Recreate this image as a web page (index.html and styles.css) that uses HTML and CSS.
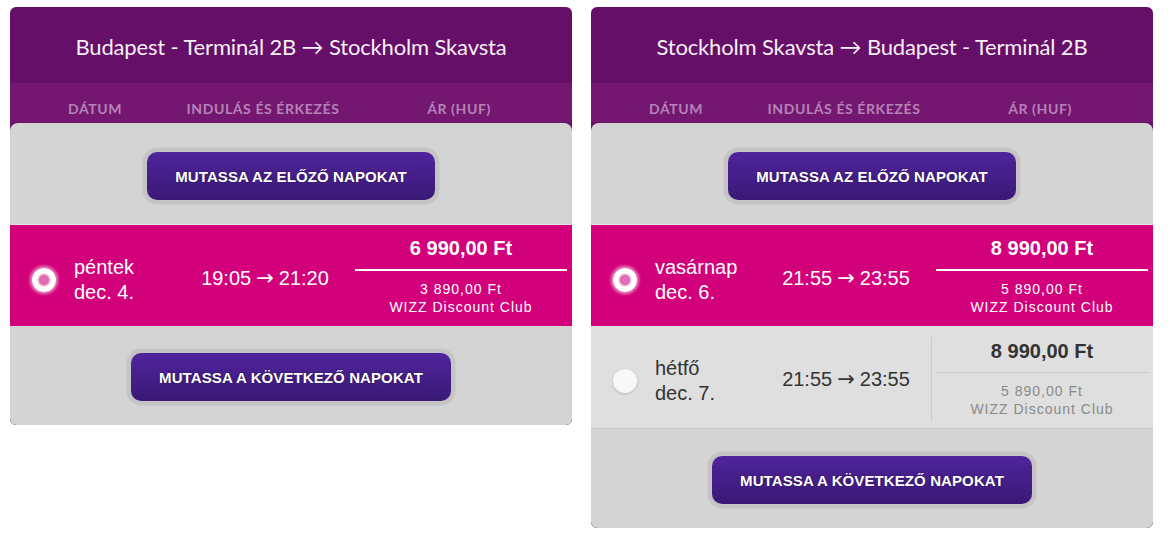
FILE: index.html
```html
<!DOCTYPE html>
<html lang="hu">
<head>
<meta charset="utf-8">
<title>Járatok</title>
<link rel="stylesheet" href="styles.css">
</head>
<body>
<div class="page">
  <section class="panel">
    <h2 class="title">Budapest - Terminál 2B → Stockholm Skavsta</h2>
    <div class="cols">
      <span>DÁTUM</span>
      <span>INDULÁS ÉS ÉRKEZÉS</span>
      <span>ÁR (HUF)</span>
    </div>
    <div class="body">
      <div class="more more-prev"><button class="btn">MUTASSA AZ ELŐZŐ NAPOKAT</button></div>
      <div class="row selected">
        <div class="date"><span class="radio"></span><span class="day">péntek<br>dec. 4.</span></div>
        <div class="time">19:05 <span class="arr">→</span> 21:20</div>
        <div class="price">
          <div class="main">6 990,00 Ft</div>
          <div class="club">3 890,00 Ft<br>WIZZ Discount Club</div>
        </div>
      </div>
      <div class="more more-next"><button class="btn">MUTASSA A KÖVETKEZŐ NAPOKAT</button></div>
    </div>
  </section>

  <section class="panel">
    <h2 class="title">Stockholm Skavsta → Budapest - Terminál 2B</h2>
    <div class="cols">
      <span>DÁTUM</span>
      <span>INDULÁS ÉS ÉRKEZÉS</span>
      <span>ÁR (HUF)</span>
    </div>
    <div class="body">
      <div class="more more-prev"><button class="btn">MUTASSA AZ ELŐZŐ NAPOKAT</button></div>
      <div class="row selected">
        <div class="date"><span class="radio"></span><span class="day">vasárnap<br>dec. 6.</span></div>
        <div class="time">21:55 <span class="arr">→</span> 23:55</div>
        <div class="price">
          <div class="main">8 990,00 Ft</div>
          <div class="club">5 890,00 Ft<br>WIZZ Discount Club</div>
        </div>
      </div>
      <div class="row plain">
        <div class="date"><span class="radio"></span><span class="day">hétfő<br>dec. 7.</span></div>
        <div class="time">21:55 <span class="arr">→</span> 23:55</div>
        <div class="price">
          <div class="main">8 990,00 Ft</div>
          <div class="club">5 890,00 Ft<br>WIZZ Discount Club</div>
        </div>
      </div>
      <div class="more more-next"><button class="btn">MUTASSA A KÖVETKEZŐ NAPOKAT</button></div>
    </div>
  </section>
</div>
</body>
</html>
```

FILE: styles.css
```css
* { box-sizing: border-box; }

html, body {
  margin: 0;
  background: #ffffff;
}

body {
  font-family: "Liberation Sans", Arial, sans-serif;
}

.page {
  display: flex;
  align-items: flex-start;
  gap: 19px;
  padding: 7px 0 0 10px;
}

.panel {
  width: 562px;
  background: #650f68;
  border-radius: 6px;
  overflow: hidden;
}

.title {
  margin: 0;
  height: 76px;
  padding-top: 3px;
  display: flex;
  align-items: center;
  justify-content: center;
  font-family: Lato, "Open Sans", sans-serif;
  font-weight: 400;
  font-size: 22px;
  color: #f6eef7;
  letter-spacing: -0.15px;
}

.cols {
  display: grid;
  grid-template-columns: 170px 166px 226px;
  height: 40px;
  padding-top: 11px;
  align-items: center;
  background: #731770;
  border-bottom: 1px solid #6a1268;
  font-family: Lato, "Open Sans", sans-serif;
  font-weight: 700;
  font-size: 14px;
  color: #b682b8;
  text-align: center;
  letter-spacing: 0.6px;
}

.body {
  background: #d4d4d4;
  border-radius: 8px 8px 6px 6px;
}

.more {
  display: flex;
  justify-content: center;
}

.more-prev {
  padding: 29px 0 24px;
}

.more-next {
  padding: 27px 0 24px;
}

.btn {
  height: 48px;
  padding: 0 28px;
  border: none;
  border-radius: 10px;
  background: linear-gradient(#4f249c, #3a1976);
  box-shadow: 0 0 0 4px #c4c4c4, 0 0 0 5px rgba(0, 0, 0, 0.03);
  color: #ffffff;
  font-family: "Liberation Sans", Arial, sans-serif;
  font-weight: 700;
  font-size: 15px;
  letter-spacing: 0.1px;
  text-shadow: 0 0 2px rgba(0, 0, 0, 0.45);
  cursor: pointer;
}

.row {
  display: grid;
  grid-template-columns: 170px 170px 222px;
}

.row.selected {
  background: #d2007a;
  color: #ffffff;
  border-top: 1px solid #e2e2e2;
}

.row.plain {
  background: #dfdfdf;
  color: #333333;
  border-bottom: 1px solid #c8c8c8;
}

.date {
  display: flex;
  align-items: center;
  padding: 8px 0 0 22px;
  gap: 18px;
}

.radio {
  flex: none;
  width: 24px;
  height: 24px;
  border-radius: 50%;
  background: #f8f8f8;
  box-shadow: 0 1px 3px rgba(0, 0, 0, 0.18);
}

.selected .radio {
  background: radial-gradient(circle, #df6db3 0, #df6db3 4.5px, #f4cfe4 6px, #ffffff 7.5px);
  box-shadow: 0 0 3px 2px rgba(255, 255, 255, 0.55);
}

.day {
  font-size: 20px;
  line-height: 25px;
}

.time {
  display: flex;
  align-items: center;
  justify-content: center;
  gap: 5px;
  padding-top: 5px;
  font-size: 20px;
}

.arr {
  font-family: "DejaVu Sans", sans-serif;
  font-size: 21px;
  line-height: 1;
}

.price {
  position: relative;
  padding: 11px 5px 10px;
  text-align: center;
}

.plain .price {
  padding-top: 13px;
}

.plain .price::before {
  content: "";
  position: absolute;
  left: 0;
  top: 11px;
  bottom: 7px;
  width: 1px;
  background: #cbcbcb;
}

.main {
  font-weight: 700;
  font-size: 20px;
  line-height: 24px;
  padding-bottom: 9px;
  border-bottom: 2px solid #ffffff;
}

.plain .main {
  border-bottom: 1px solid #c9c9c9;
  padding-bottom: 9px;
}

.club {
  margin-top: 9px;
  font-size: 14px;
  line-height: 18px;
  letter-spacing: 1px;
}

.plain .club {
  color: #8a8a8a;
}
```
